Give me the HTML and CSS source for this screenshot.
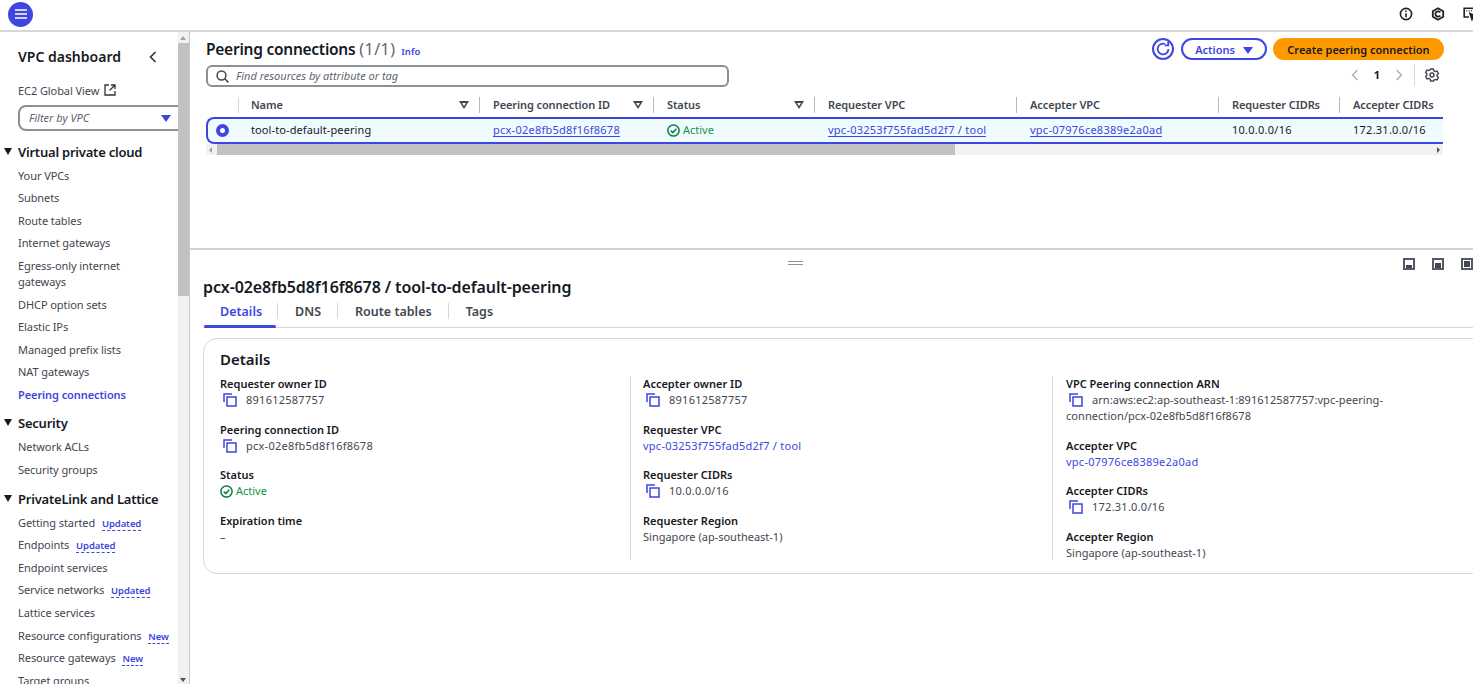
FILE: index.html
```html
<!DOCTYPE html>
<html lang="en">
<head>
    <meta charset="UTF-8">
    <meta content="width=device-width, initial-scale=1.0" name="viewport">
    <link rel="stylesheet" href="styles.css">
    <title>Peering connections</title>
</head>
<body>

<!-- Top bar -->
<header class="topbar">
    <button class="menu-btn" aria-label="Menu">
        <svg width="14" height="12" viewBox="0 0 14 12"><path d="M1 2h12M1 6h12M1 10h12" stroke="#fff" stroke-width="1.6"/></svg>
    </button>
    <div class="top-icons">
        <svg width="14" height="14" viewBox="0 0 14 14" fill="none" stroke="#222" stroke-width="1.6"><circle cx="7" cy="7" r="5.6"/><path d="M7 6.2v4M7 3.4v1.7"/></svg>
        <svg width="14" height="14" viewBox="0 0 14 14" fill="none" stroke="#222" stroke-width="1.8"><path d="M7 1.2l5.2 3v5.6L7 12.8l-5.2-3V4.2z"/><path d="M9.2 5.6A2.6 2.6 0 1 0 9.2 8.4"/></svg>
        <svg width="16" height="14" viewBox="0 0 16 14" fill="none" stroke="#222" stroke-width="1.6"><path d="M6 10H1.2V1.2h11.6V6"/><path d="M3.4 3.8h.8M5.8 3.8h.8M8.2 3.8h.8M10.4 3.8h.8" stroke-width="1.4"/><path d="M7 6.5l2 6 1.2-2.4 2.6-.8z" fill="#222"/><path d="M13 12.6h3"/></svg>
    </div>
</header>

<div class="layout">
    <!-- Side navigation -->
    <nav class="sidenav">
        <div class="sidenav-inner">
            <div class="nav-title">
                <span>VPC dashboard</span>
                <svg width="8" height="12" viewBox="0 0 8 12" fill="none" stroke="#333" stroke-width="1.6"><path d="M6.5 1L1.5 6l5 5"/></svg>
            </div>
            <div class="nav-link global">EC2 Global View
                <svg width="12" height="12" viewBox="0 0 12 12" fill="none" stroke="#333" stroke-width="1.3"><path d="M5 1H1v10h10V7M7 1h4v4M11 1L5.5 6.5"/></svg>
            </div>
            <div class="vpc-filter">
                <span>Filter by VPC</span>
                <i class="caret-blue"></i>
            </div>

            <div class="nav-section first"><i class="caret-dark"></i>Virtual private cloud</div>
            <a class="nav-link">Your VPCs</a>
            <a class="nav-link">Subnets</a>
            <a class="nav-link">Route tables</a>
            <a class="nav-link">Internet gateways</a>
            <a class="nav-link">Egress-only internet<br>gateways</a>
            <a class="nav-link">DHCP option sets</a>
            <a class="nav-link">Elastic IPs</a>
            <a class="nav-link">Managed prefix lists</a>
            <a class="nav-link">NAT gateways</a>
            <a class="nav-link active">Peering connections</a>

            <div class="nav-section"><i class="caret-dark"></i>Security</div>
            <a class="nav-link">Network ACLs</a>
            <a class="nav-link">Security groups</a>

            <div class="nav-section"><i class="caret-dark"></i>PrivateLink and Lattice</div>
            <a class="nav-link">Getting started <b class="tag">Updated</b></a>
            <a class="nav-link">Endpoints <b class="tag">Updated</b></a>
            <a class="nav-link">Endpoint services</a>
            <a class="nav-link">Service networks <b class="tag">Updated</b></a>
            <a class="nav-link">Lattice services</a>
            <a class="nav-link">Resource configurations <b class="tag">New</b></a>
            <a class="nav-link">Resource gateways <b class="tag">New</b></a>
            <a class="nav-link">Target groups</a>
        </div>
        <div class="nav-scroll">
            <i class="arrow-up"></i>
            <div class="nav-thumb"></div>
            <i class="arrow-down"></i>
        </div>
    </nav>

    <main class="content">
        <!-- Peering connections table -->
        <section class="top-pane">
            <div class="pane-head">
                <h1>Peering connections <span class="count">(1/1)</span> <a class="info">Info</a></h1>
                <div class="head-actions">
                    <button class="refresh" aria-label="Refresh">
                        <svg width="16" height="16" viewBox="0 0 16 16" fill="none" stroke="#3d46e0" stroke-width="1.8"><path d="M13.4 8A5.4 5.4 0 1 1 10 3"/><path d="M13.2 1v3.4H9.8"/></svg>
                    </button>
                    <button class="btn-outline">Actions <i class="caret-blue"></i></button>
                    <button class="btn-primary">Create peering connection</button>
                </div>
            </div>
            <div class="search-row">
                <div class="search">
                    <svg width="13" height="13" viewBox="0 0 13 13" fill="none" stroke="#424650" stroke-width="1.5"><circle cx="5.5" cy="5.5" r="4.4"/><path d="M8.8 8.8l3.6 3.6"/></svg>
                    <span>Find resources by attribute or tag</span>
                </div>
            </div>
            <div class="pager">
                <svg width="8" height="12" viewBox="0 0 8 12" fill="none" stroke="#a9adb5" stroke-width="1.4"><path d="M6.5 1L1.5 6l5 5"/></svg>
                <b>1</b>
                <svg width="8" height="12" viewBox="0 0 8 12" fill="none" stroke="#a9adb5" stroke-width="1.4"><path d="M1.5 1l5 5-5 5"/></svg>
                <span class="pager-sep"></span>
                <svg width="14" height="14" viewBox="0 0 14 14" fill="none" stroke="#424650" stroke-width="1.4"><path d="M5.6 1h2.8l.4 1.7 1.6.9 1.7-.5 1.3 2.4-1.3 1.2v1.6l1.3 1.2-1.3 2.4-1.7-.5-1.6.9L8.4 13H5.6l-.4-1.7-1.6-.9-1.7.5L.6 8.5 1.9 7.3V5.7L.6 4.5l1.3-2.4 1.7.5 1.6-.9z"/><circle cx="7" cy="7" r="2"/></svg>
            </div>

            <div class="table">
                <div class="table-row table-header">
                    <div class="cell cell-select"></div>
                    <div class="cell"><span>Name</span><i class="sort"></i></div>
                    <div class="cell"><span>Peering connection ID</span><i class="sort"></i></div>
                    <div class="cell"><span>Status</span><i class="sort"></i></div>
                    <div class="cell"><span>Requester VPC</span></div>
                    <div class="cell"><span>Accepter VPC</span></div>
                    <div class="cell"><span>Requester CIDRs</span></div>
                    <div class="cell"><span>Accepter CIDRs</span></div>
                </div>
                <div class="table-row table-selected">
                    <div class="cell cell-select"><i class="radio"></i></div>
                    <div class="cell cell-name">tool-to-default-peering</div>
                    <div class="cell"><a class="link-under num">pcx-02e8fb5d8f16f8678</a></div>
                    <div class="cell status">
                        <svg width="13" height="13" viewBox="0 0 13 13" fill="none" stroke="#0b7d3e" stroke-width="1.5"><circle cx="6.5" cy="6.5" r="5.6"/><path d="M3.8 6.6l2 2 3.5-3.8"/></svg>
                        Active
                    </div>
                    <div class="cell"><a class="link-under num">vpc-03253f755fad5d2f7 / tool</a></div>
                    <div class="cell"><a class="link-under num">vpc-07976ce8389e2a0ad</a></div>
                    <div class="cell num">10.0.0.0/16</div>
                    <div class="cell num">172.31.0.0/16</div>
                </div>
            </div>
            <div class="table-scroll">
                <i class="arrow-left"></i>
                <div class="table-thumb"></div>
                <i class="arrow-right"></i>
            </div>
        </section>

        <!-- Split panel -->
        <section class="bottom-pane">
            <div class="split-bar">
                <span class="drag-handle"></span>
                <div class="split-icons">
                    <span class="split-icon bottom"></span>
                    <span class="split-icon middle"></span>
                    <span class="split-icon full"></span>
                </div>
            </div>
            <h2>pcx-02e8fb5d8f16f8678 / tool-to-default-peering</h2>
            <div class="tabs">
                <div class="tab active">Details</div>
                <div class="tab">DNS</div>
                <div class="tab">Route tables</div>
                <div class="tab">Tags</div>
            </div>

            <div class="card">
                <h3>Details</h3>
                <div class="columns">
                    <div class="column">
                        <div class="field">
                            <label>Requester owner ID</label>
                            <div class="value copy num"><svg class="copy-icon" viewBox="0 0 14 14"><path d="M1 9V1h8M4 4h9v9H4z"/></svg>891612587757</div>
                        </div>
                        <div class="field">
                            <label>Peering connection ID</label>
                            <div class="value copy num"><svg class="copy-icon" viewBox="0 0 14 14"><path d="M1 9V1h8M4 4h9v9H4z"/></svg>pcx-02e8fb5d8f16f8678</div>
                        </div>
                        <div class="field">
                            <label>Status</label>
                            <div class="value status">
                                <svg width="13" height="13" viewBox="0 0 13 13" fill="none" stroke="#0b7d3e" stroke-width="1.5"><circle cx="6.5" cy="6.5" r="5.6"/><path d="M3.8 6.6l2 2 3.5-3.8"/></svg>
                                Active
                            </div>
                        </div>
                        <div class="field">
                            <label>Expiration time</label>
                            <div class="value">–</div>
                        </div>
                    </div>
                    <div class="column">
                        <div class="field">
                            <label>Accepter owner ID</label>
                            <div class="value copy num"><svg class="copy-icon" viewBox="0 0 14 14"><path d="M1 9V1h8M4 4h9v9H4z"/></svg>891612587757</div>
                        </div>
                        <div class="field">
                            <label>Requester VPC</label>
                            <div class="value num"><a class="link">vpc-03253f755fad5d2f7 / tool</a></div>
                        </div>
                        <div class="field">
                            <label>Requester CIDRs</label>
                            <div class="value copy num"><svg class="copy-icon" viewBox="0 0 14 14"><path d="M1 9V1h8M4 4h9v9H4z"/></svg>10.0.0.0/16</div>
                        </div>
                        <div class="field">
                            <label>Requester Region</label>
                            <div class="value">Singapore (ap-southeast-1)</div>
                        </div>
                    </div>
                    <div class="column">
                        <div class="field">
                            <label>VPC Peering connection ARN</label>
                            <div class="value copy arn"><svg class="copy-icon" viewBox="0 0 14 14"><path d="M1 9V1h8M4 4h9v9H4z"/></svg>arn:aws:ec2:ap-southeast-1:891612587757:vpc-peering-<br><span class="arn-rest">connection/pcx-02e8fb5d8f16f8678</span></div>
                        </div>
                        <div class="field">
                            <label>Accepter VPC</label>
                            <div class="value num"><a class="link">vpc-07976ce8389e2a0ad</a></div>
                        </div>
                        <div class="field">
                            <label>Accepter CIDRs</label>
                            <div class="value copy num"><svg class="copy-icon" viewBox="0 0 14 14"><path d="M1 9V1h8M4 4h9v9H4z"/></svg>172.31.0.0/16</div>
                        </div>
                        <div class="field">
                            <label>Accepter Region</label>
                            <div class="value">Singapore (ap-southeast-1)</div>
                        </div>
                    </div>
                </div>
            </div>
        </section>
    </main>
</div>

</body>
</html>
```

FILE: styles.css
```css
* {
    box-sizing: border-box;
}

html, body {
    height: 100%;
}

body {
    margin: 0;
    overflow: hidden;
    background: #fff;
    color: #16191f;
    font-family: "Noto Sans", "Open Sans", sans-serif;
    font-size: 11px;
    line-height: 16px;
}

a, i {
    display: inline-block;
    font-style: normal;
}

button {
    font-family: inherit;
    cursor: pointer;
}

/* digits run wider in the reference */
.num {
    letter-spacing: .25px;
}

/* Top bar */
.topbar {
    height: 32px;
    display: flex;
    align-items: center;
    justify-content: space-between;
    padding: 0 0 2px 8px;
    border-bottom: 2px solid #d5d7da;
}

.menu-btn {
    width: 25px;
    height: 25px;
    padding: 0;
    border: none;
    border-radius: 50%;
    background: #3d46e0;
    display: flex;
    align-items: center;
    justify-content: center;
}

.top-icons {
    display: flex;
    align-items: center;
    gap: 18px;
    margin-right: -6px;
}

.layout {
    display: flex;
    height: 652px;
}

/* Side navigation */
.sidenav {
    width: 190px;
    flex: none;
    display: flex;
    overflow: hidden;
    border-right: 1px solid #c6c8cc;
}

.sidenav-inner {
    width: 178px;
    flex: none;
    padding: 15px 0 0 18px;
    overflow: hidden;
}

.nav-title {
    display: flex;
    align-items: center;
    justify-content: space-between;
    height: 20px;
    padding-right: 21px;
    font-size: 14px;
    font-weight: 600;
    margin-bottom: 16px;
}

.nav-link {
    display: block;
    color: #424650;
    margin-bottom: 6.62px;
    letter-spacing: -.08px;
    white-space: nowrap;
}

.nav-link.active {
    color: #3d46e0;
    font-weight: 600;
}

.nav-link.global {
    margin-bottom: 6px;
}

.global svg {
    margin-left: 2px;
    vertical-align: -1px;
}

.vpc-filter {
    width: 170px;
    height: 26px;
    border: 2px solid #8c8f96;
    border-radius: 8px;
    display: flex;
    align-items: center;
    justify-content: space-between;
    padding: 0 15px 0 9px;
    color: #5f6570;
    font-style: italic;
    margin-bottom: 12px;
}

.caret-blue {
    width: 0;
    height: 0;
    border-left: 5px solid transparent;
    border-right: 5px solid transparent;
    border-top: 7px solid #3d46e0;
}

.caret-dark {
    position: absolute;
    left: -14px;
    top: 5px;
    width: 0;
    height: 0;
    border-left: 4.5px solid transparent;
    border-right: 4.5px solid transparent;
    border-top: 7px solid #16191f;
}

.nav-section {
    position: relative;
    font-size: 13px;
    font-weight: 600;
    height: 18px;
    line-height: 18px;
    letter-spacing: -.22px;
    margin-top: 11.5px;
    margin-bottom: 7px;
    white-space: nowrap;
}

.nav-section.first {
    margin-top: 0;
    margin-bottom: 6.5px;
}

.tag {
    display: inline-block;
    margin-left: 4px;
    font-size: 9.5px;
    line-height: 12px;
    font-weight: 600;
    color: #3d46e0;
    border-bottom: 1px dashed #3d46e0;
}

.nav-scroll {
    width: 11px;
    flex: none;
    background: #f1f1f1;
    position: relative;
}

.nav-thumb {
    position: absolute;
    left: 0;
    top: 11px;
    width: 100%;
    height: 253px;
    background: #c1c1c1;
}

.arrow-up, .arrow-down {
    position: absolute;
    left: 2px;
    width: 0;
    height: 0;
    border-left: 3.5px solid transparent;
    border-right: 3.5px solid transparent;
}

.arrow-up {
    top: 4px;
    border-bottom: 4px solid #a3a3a3;
}

.arrow-down {
    bottom: 2px;
    border-top: 4px solid #505050;
}

/* Main content */
.content {
    flex: 1;
    min-width: 0;
}

.top-pane {
    height: 218px;
    padding: 6px 29px 0 16px;
    border-bottom: 2px solid #d0d2d5;
}

.pane-head {
    display: flex;
    align-items: center;
    justify-content: space-between;
    height: 24px;
}

h1 {
    margin: 0;
    font-size: 15.5px;
    font-weight: 600;
    line-height: 24px;
    letter-spacing: -.25px;
}

.count {
    font-size: 16px;
    font-weight: 400;
    letter-spacing: .5px;
    color: #5f6570;
}

.info {
    margin-left: 2px;
    font-size: 9.5px;
    font-weight: 600;
    letter-spacing: 0;
    color: #3d46e0;
}

.head-actions {
    display: flex;
    align-items: center;
    gap: 7px;
    margin-top: -2px;
}

.refresh {
    width: 22px;
    height: 22px;
    padding: 0;
    border: 2px solid #3d46e0;
    border-radius: 50%;
    background: #fff;
    display: flex;
    align-items: center;
    justify-content: center;
}

.btn-outline {
    height: 22px;
    width: 86px;
    padding: 0;
    border: 2px solid #3d46e0;
    border-radius: 12px;
    background: #fff;
    color: #3d46e0;
    font-size: 11px;
    font-weight: 600;
}

.btn-outline .caret-blue {
    margin-left: 5px;
}

.btn-primary {
    height: 22px;
    width: 171px;
    margin-left: -1px;
    padding: 0;
    border: none;
    border-radius: 12px;
    background: #ff9900;
    color: #16191f;
    font-size: 11px;
    font-weight: 600;
}

.search-row {
    margin-top: 3px;
}

.search {
    width: 523px;
    height: 22px;
    border: 2px solid #8c8f96;
    border-radius: 6px;
    display: flex;
    align-items: center;
    gap: 7px;
    padding-left: 8px;
    color: #5f6570;
    font-style: italic;
}

.pager {
    display: flex;
    align-items: center;
    justify-content: flex-end;
    height: 22px;
    margin-top: -23px;
    padding-right: 5px;
}

.pager b {
    margin: 0 15px;
}

.pager-sep {
    width: 1px;
    height: 22px;
    background: #d5d7da;
    margin: 0 10px 0 11px;
}

.table {
    margin-top: 10px;
    width: 1237px;
}

.table-row {
    display: grid;
    grid-template-columns: 32px 241px 174px 161px 202px 202px 121px 104px;
}

.table-header {
    height: 21px;
    font-weight: 600;
    letter-spacing: -.1px;
    color: #424650;
}

.table-header .cell {
    display: flex;
    align-items: center;
    justify-content: space-between;
    padding: 0 10px 0 13px;
    height: 16px;
    margin-top: 1px;
    white-space: nowrap;
    border-left: 1px solid #b6b9be;
}

.table-header .cell-select {
    border-left: none;
}

.table-header .cell:nth-child(2) {
    padding-left: 12px;
    border-left: 1px solid #d5d7da;
}

/* hollow sort triangle */
.sort {
    position: relative;
    width: 0;
    height: 0;
    border-left: 5px solid transparent;
    border-right: 5px solid transparent;
    border-top: 8px solid #424650;
}

.sort::after {
    content: "";
    position: absolute;
    left: -2px;
    top: -6px;
    width: 0;
    height: 0;
    border-left: 2px solid transparent;
    border-right: 2px solid transparent;
    border-top: 3px solid #fff;
}

.table-selected {
    height: 27px;
    background: #f0fbff;
    border: 2px solid #3d46e0;
    border-right: none;
    border-radius: 8px 0 0 8px;
    align-items: center;
}

.table-selected .cell {
    margin-top: -1px;
    padding-left: 12px;
    white-space: nowrap;
}

.table-selected .cell-name {
    padding-left: 11px;
    letter-spacing: .1px;
}

.table-selected .cell-select {
    padding-left: 8px;
    display: flex;
}

.radio {
    width: 13px;
    height: 13px;
    border-radius: 50%;
    border: 4px solid #3d46e0;
    background: #fff;
}

.status {
    display: flex;
    align-items: center;
    gap: 3px;
    color: #16934a;
}

.link-under {
    color: #3d46e0;
    border-bottom: 1px solid #3d46e0;
    line-height: 13px;
    text-decoration: none;
}

.link {
    color: #3d46e0;
}

.table-scroll {
    position: relative;
    width: 1237px;
    height: 11px;
    background: #f1f1f1;
}

.table-thumb {
    position: absolute;
    left: 11px;
    top: 0;
    width: 738px;
    height: 100%;
    background: #c1c1c1;
}

.arrow-left, .arrow-right {
    position: absolute;
    top: 3px;
    width: 0;
    height: 0;
    border-top: 3px solid transparent;
    border-bottom: 3px solid transparent;
}

.arrow-left {
    left: 3px;
    border-right: 3px solid #a3a3a3;
}

.arrow-right {
    right: 3px;
    border-left: 3px solid #505050;
}

/* Split panel */
.bottom-pane {
    padding-left: 13px;
}

.split-bar {
    position: relative;
    display: flex;
    justify-content: flex-end;
    height: 25px;
    padding-top: 8px;
}

.drag-handle {
    position: absolute;
    left: 585px;
    top: 11px;
    width: 15px;
    height: 4px;
    border-top: 1px solid #8d9096;
    border-bottom: 1px solid #8d9096;
}

.split-icons {
    display: flex;
    gap: 17px;
    height: 12px;
}

.split-icon {
    position: relative;
    display: block;
    width: 12px;
    height: 12px;
    border: 2px solid #545b64;
    background: #fff;
}

.split-icon::after {
    content: "";
    position: absolute;
    left: 1px;
    right: 1px;
    bottom: 0;
    background: #424650;
}

.split-icon.bottom::after {
    height: 3px;
}

.split-icon.middle::after {
    height: 5px;
}

.split-icon.full::after {
    top: 1px;
    bottom: 1px;
}

h2 {
    margin: 0;
    font-size: 16px;
    font-weight: 600;
    line-height: 24px;
    height: 26px;
    letter-spacing: -.11px;
}

.tabs {
    display: flex;
    height: 30px;
    align-items: flex-start;
    padding-left: 1px;
    margin-top: -3px;
    border-bottom: 1px solid #d5d7da;
    margin-bottom: 10px;
}

.tab {
    position: relative;
    height: 29px;
    padding: 5px 16px 0 18px;
    font-size: 12.5px;
    font-weight: 600;
    line-height: 17px;
    color: #424650;
}

.tab + .tab::before {
    content: "";
    position: absolute;
    left: 0;
    top: 5px;
    height: 16px;
    width: 1px;
    background: #d5d7da;
}

.tab.active {
    color: #3d46e0;
    padding: 5px 15px 0 16px;
}

.tab.active::after {
    content: "";
    position: absolute;
    left: 0;
    right: 1px;
    bottom: -1px;
    height: 3px;
    border-radius: 2px;
    background: #3d46e0;
}

.card {
    width: 1290px;
    height: 236px;
    border: 1px solid #d5d7da;
    border-radius: 14px;
    padding: 10px 16px 0;
}

h3 {
    margin: 0 0 7px;
    font-size: 15px;
    font-weight: 600;
    line-height: 20px;
}

.columns {
    display: grid;
    grid-template-columns: repeat(3, 423px);
}

.column {
    height: 184px;
    padding-right: 13px;
}

.column + .column {
    border-left: 1px solid #d5d7da;
    margin-left: -13px;
    padding-left: 12px;
    padding-right: 0;
    width: 423px;
}

.column:nth-child(3) {
    margin-left: -14px;
    padding-left: 13px;
}

.field {
    margin-bottom: 13.5px;
}

.field label {
    display: block;
    font-weight: 600;
    color: #16191f;
}

.value {
    color: #424650;
}

.value.status {
    color: #16934a;
}

.copy {
    position: relative;
    padding-left: 26px;
}

.arn {
    letter-spacing: .06px;
}

.arn-rest {
    margin-left: -26px;
}

.copy-icon {
    position: absolute;
    left: 3px;
    top: 1px;
    width: 14px;
    height: 14px;
    fill: none;
    stroke: #3d46e0;
    stroke-width: 1.5;
}
```
